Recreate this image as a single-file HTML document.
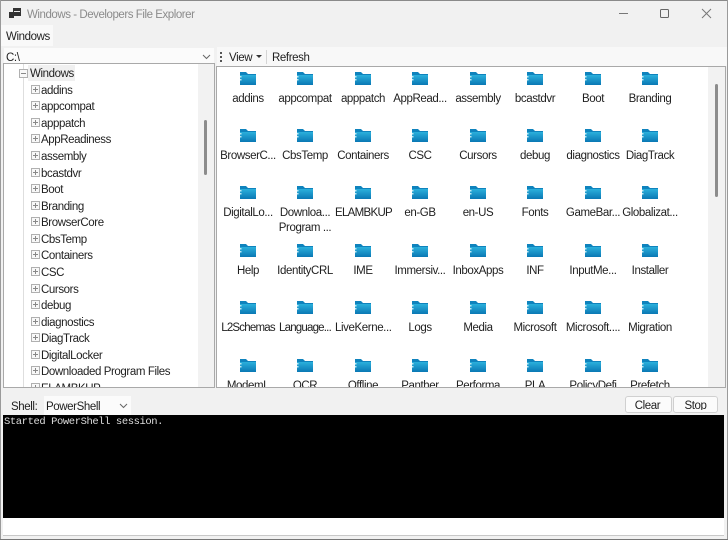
<!DOCTYPE html>
<html><head><meta charset="utf-8"><style>
html,body{margin:0;padding:0;background:#fff}
#w{position:relative;width:728px;height:540px;overflow:hidden;background:#f1f1f1;font-family:"Liberation Sans",sans-serif;font-size:11.500px;letter-spacing:-.4px;color:#1f1f1f}
#w div,#w svg{position:absolute}
.t{white-space:nowrap;line-height:16px;margin-top:1px}
.c{width:56px;text-align:center;white-space:nowrap;line-height:15px;overflow:visible;margin-top:1px}
.f{width:18px;height:15px}
.e{width:7px;height:7px;border:1px solid #b0b0b0;background:#f8f8f8}
.e:before{content:"";position:absolute;left:1px;top:3px;width:5px;height:1px;background:#888}
.p:after{content:"";position:absolute;left:3px;top:1px;width:1px;height:5px;background:#888}
</style></head><body><div id="w">
<svg width="0" height="0"><defs><linearGradient id="g" x1="0" y1="0" x2="0" y2="1"><stop offset="0" stop-color="#2bb0dc"/><stop offset="1" stop-color="#0a78b4"/></linearGradient>
<symbol id="fo" viewBox="0 0 18 15"><path d="M1 1h6l2 2h8v11H1z" fill="#0f83bd"/><path d="M1 4h16v10H1z" fill="url(#g)"/><path d="M1 5h1.500v1.500H1zM1 8h1.500v1.500H1z" fill="#bfeaf5"/></symbol></defs></svg>

<div style="left:0;top:0;width:728px;height:1px;background:#8a8a8a"></div>
<div style="left:0;top:0;width:1px;height:540px;background:#9a9a9a"></div>
<div style="left:727px;top:0;width:1px;height:540px;background:#9a9a9a"></div>
<div style="left:0;top:539px;width:728px;height:1px;background:#777"></div>

<svg style="left:9px;top:8px" width="13" height="12" viewBox="0 0 13 12"><path d="M4 0h8v8H4z" fill="#333"/><path d="M0 4h5v6H0z" fill="#333"/><path d="M5 3h6v1H5z" fill="#eee"/></svg>
<div class="t" style="left:27px;top:6px;color:#8b8b8b;letter-spacing:-.45px">Windows - Developers File Explorer</div>
<svg style="left:600px;top:0" width="128" height="28"><path d="M19 13.500h9" stroke="#777" fill="none"/><rect x="60.500" y="9.500" width="8" height="8" rx="1" stroke="#666" fill="none"/><path d="M102 9l9 9M111 9l-9 9" stroke="#777" fill="none"/></svg>

<div style="left:1px;top:25px;width:52px;height:21px;background:#f9f9f9"></div>
<div class="t" style="left:6px;top:28px">Windows</div>

<div style="left:4px;top:48px;width:210px;height:16px;background:#fbfbfb"></div>
<div class="t" style="left:6px;top:49px">C:\</div>
<svg style="left:202px;top:54px" width="9" height="6"><path d="M1 1l3.500 3.500L8 1" stroke="#666" fill="none"/></svg>
<div style="left:3px;top:63px;width:210px;height:323px;background:#fff;border:1px solid #a9a9a9;overflow:hidden">
<div style="left:194px;top:0;width:16px;height:323px;background:#f2f2f2"></div>
<div style="left:200px;top:56px;width:3px;height:55px;background:#8c8c8c;border-radius:2px"></div>
<div style="left:24px;top:1px;width:47px;height:16px;background:#f0f0f0"></div>
<div style="left:19px;top:0;width:1px;height:323px;background:#dedede"></div>
<div style="left:15px;top:5px" class="e"></div>
<div class="t" style="left:26px;top:1px">Windows</div>
<div class="e p" style="left:27px;top:21px"></div><div class="t" style="left:37px;top:18px">addins</div>
<div class="e p" style="left:27px;top:37px"></div><div class="t" style="left:37px;top:34px">appcompat</div>
<div class="e p" style="left:27px;top:54px"></div><div class="t" style="left:37px;top:51px">apppatch</div>
<div class="e p" style="left:27px;top:70px"></div><div class="t" style="left:37px;top:67px">AppReadiness</div>
<div class="e p" style="left:27px;top:87px"></div><div class="t" style="left:37px;top:84px">assembly</div>
<div class="e p" style="left:27px;top:104px"></div><div class="t" style="left:37px;top:101px">bcastdvr</div>
<div class="e p" style="left:27px;top:120px"></div><div class="t" style="left:37px;top:117px">Boot</div>
<div class="e p" style="left:27px;top:137px"></div><div class="t" style="left:37px;top:134px">Branding</div>
<div class="e p" style="left:27px;top:153px"></div><div class="t" style="left:37px;top:150px">BrowserCore</div>
<div class="e p" style="left:27px;top:170px"></div><div class="t" style="left:37px;top:167px">CbsTemp</div>
<div class="e p" style="left:27px;top:186px"></div><div class="t" style="left:37px;top:183px">Containers</div>
<div class="e p" style="left:27px;top:203px"></div><div class="t" style="left:37px;top:200px">CSC</div>
<div class="e p" style="left:27px;top:220px"></div><div class="t" style="left:37px;top:217px">Cursors</div>
<div class="e p" style="left:27px;top:236px"></div><div class="t" style="left:37px;top:233px">debug</div>
<div class="e p" style="left:27px;top:253px"></div><div class="t" style="left:37px;top:250px">diagnostics</div>
<div class="e p" style="left:27px;top:269px"></div><div class="t" style="left:37px;top:266px">DiagTrack</div>
<div class="e p" style="left:27px;top:286px"></div><div class="t" style="left:37px;top:283px">DigitalLocker</div>
<div class="e p" style="left:27px;top:302px"></div><div class="t" style="left:37px;top:299px">Downloaded Program Files</div>
<div class="e p" style="left:27px;top:319px"></div><div class="t" style="left:37px;top:316px">ELAMBKUP</div>
</div>

<div style="left:217px;top:47px;width:510px;height:19px;background:#f8f8f8"></div>
<div style="left:220px;top:52px;width:2px;height:10px;border-left:2px dotted #555"></div>
<div class="t" style="left:229px;top:49px">View</div>
<svg style="left:256px;top:55px" width="6" height="4"><path d="M0 0h6L3 3z" fill="#333"/></svg>
<div style="left:266px;top:50px;width:1px;height:14px;background:#d5d5d5"></div>
<div class="t" style="left:272px;top:49px">Refresh</div>

<div style="left:216px;top:66px;width:508px;height:320px;background:#fff;border:1px solid #a9a9a9;overflow:hidden">
<div style="left:491px;top:0;width:17px;height:320px;background:#f2f2f2"></div>
<div style="left:498px;top:17px;width:3px;height:113px;background:#8c8c8c;border-radius:2px"></div>
</div>

<svg class="f" style="left:239px;top:71px"><use href="#fo"/></svg><div class="c" style="left:220px;top:91px">addins</div>
<svg class="f" style="left:296px;top:71px"><use href="#fo"/></svg><div class="c" style="left:277px;top:91px">appcompat</div>
<svg class="f" style="left:354px;top:71px"><use href="#fo"/></svg><div class="c" style="left:335px;top:91px">apppatch</div>
<svg class="f" style="left:411px;top:71px"><use href="#fo"/></svg><div class="c" style="left:392px;top:91px">AppRead...</div>
<svg class="f" style="left:469px;top:71px"><use href="#fo"/></svg><div class="c" style="left:450px;top:91px">assembly</div>
<svg class="f" style="left:526px;top:71px"><use href="#fo"/></svg><div class="c" style="left:507px;top:91px">bcastdvr</div>
<svg class="f" style="left:584px;top:71px"><use href="#fo"/></svg><div class="c" style="left:565px;top:91px">Boot</div>
<svg class="f" style="left:641px;top:71px"><use href="#fo"/></svg><div class="c" style="left:622px;top:91px">Branding</div>

<svg class="f" style="left:239px;top:128px"><use href="#fo"/></svg><div class="c" style="left:220px;top:148px">BrowserC...</div>
<svg class="f" style="left:296px;top:128px"><use href="#fo"/></svg><div class="c" style="left:277px;top:148px">CbsTemp</div>
<svg class="f" style="left:354px;top:128px"><use href="#fo"/></svg><div class="c" style="left:335px;top:148px">Containers</div>
<svg class="f" style="left:411px;top:128px"><use href="#fo"/></svg><div class="c" style="left:392px;top:148px">CSC</div>
<svg class="f" style="left:469px;top:128px"><use href="#fo"/></svg><div class="c" style="left:450px;top:148px">Cursors</div>
<svg class="f" style="left:526px;top:128px"><use href="#fo"/></svg><div class="c" style="left:507px;top:148px">debug</div>
<svg class="f" style="left:584px;top:128px"><use href="#fo"/></svg><div class="c" style="left:565px;top:148px">diagnostics</div>
<svg class="f" style="left:641px;top:128px"><use href="#fo"/></svg><div class="c" style="left:622px;top:148px">DiagTrack</div>

<svg class="f" style="left:239px;top:185px"><use href="#fo"/></svg><div class="c" style="left:220px;top:205px">DigitalLo...</div>
<svg class="f" style="left:296px;top:185px"><use href="#fo"/></svg><div class="c" style="left:277px;top:205px">Downloa...<br>Program ...</div>
<svg class="f" style="left:354px;top:185px"><use href="#fo"/></svg><div class="c" style="left:335px;top:205px;letter-spacing:-.7px">ELAMBKUP</div>
<svg class="f" style="left:411px;top:185px"><use href="#fo"/></svg><div class="c" style="left:392px;top:205px">en-GB</div>
<svg class="f" style="left:469px;top:185px"><use href="#fo"/></svg><div class="c" style="left:450px;top:205px">en-US</div>
<svg class="f" style="left:526px;top:185px"><use href="#fo"/></svg><div class="c" style="left:507px;top:205px">Fonts</div>
<svg class="f" style="left:584px;top:185px"><use href="#fo"/></svg><div class="c" style="left:565px;top:205px">GameBar...</div>
<svg class="f" style="left:641px;top:185px"><use href="#fo"/></svg><div class="c" style="left:622px;top:205px">Globalizat...</div>

<svg class="f" style="left:239px;top:243px"><use href="#fo"/></svg><div class="c" style="left:220px;top:263px">Help</div>
<svg class="f" style="left:296px;top:243px"><use href="#fo"/></svg><div class="c" style="left:277px;top:263px">IdentityCRL</div>
<svg class="f" style="left:354px;top:243px"><use href="#fo"/></svg><div class="c" style="left:335px;top:263px">IME</div>
<svg class="f" style="left:411px;top:243px"><use href="#fo"/></svg><div class="c" style="left:392px;top:263px">Immersiv...</div>
<svg class="f" style="left:469px;top:243px"><use href="#fo"/></svg><div class="c" style="left:450px;top:263px">InboxApps</div>
<svg class="f" style="left:526px;top:243px"><use href="#fo"/></svg><div class="c" style="left:507px;top:263px">INF</div>
<svg class="f" style="left:584px;top:243px"><use href="#fo"/></svg><div class="c" style="left:565px;top:263px">InputMe...</div>
<svg class="f" style="left:641px;top:243px"><use href="#fo"/></svg><div class="c" style="left:622px;top:263px">Installer</div>

<svg class="f" style="left:239px;top:300px"><use href="#fo"/></svg><div class="c" style="left:220px;top:320px;letter-spacing:-.8px">L2Schemas</div>
<svg class="f" style="left:296px;top:300px"><use href="#fo"/></svg><div class="c" style="left:277px;top:320px;letter-spacing:-.8px">Language...</div>
<svg class="f" style="left:354px;top:300px"><use href="#fo"/></svg><div class="c" style="left:335px;top:320px">LiveKerne...</div>
<svg class="f" style="left:411px;top:300px"><use href="#fo"/></svg><div class="c" style="left:392px;top:320px">Logs</div>
<svg class="f" style="left:469px;top:300px"><use href="#fo"/></svg><div class="c" style="left:450px;top:320px">Media</div>
<svg class="f" style="left:526px;top:300px"><use href="#fo"/></svg><div class="c" style="left:507px;top:320px">Microsoft</div>
<svg class="f" style="left:584px;top:300px"><use href="#fo"/></svg><div class="c" style="left:565px;top:320px">Microsoft....</div>
<svg class="f" style="left:641px;top:300px"><use href="#fo"/></svg><div class="c" style="left:622px;top:320px">Migration</div>

<svg class="f" style="left:239px;top:358px"><use href="#fo"/></svg>
<svg class="f" style="left:296px;top:358px"><use href="#fo"/></svg>
<svg class="f" style="left:354px;top:358px"><use href="#fo"/></svg>
<svg class="f" style="left:411px;top:358px"><use href="#fo"/></svg>
<svg class="f" style="left:469px;top:358px"><use href="#fo"/></svg>
<svg class="f" style="left:526px;top:358px"><use href="#fo"/></svg>
<svg class="f" style="left:584px;top:358px"><use href="#fo"/></svg>
<svg class="f" style="left:641px;top:358px"><use href="#fo"/></svg>
<div style="left:217px;top:379px;width:490px;height:8px;overflow:hidden">
<div class="c" style="left:3px;top:-1px">ModemL</div><div class="c" style="left:60px;top:-1px">OCR</div><div class="c" style="left:118px;top:-1px">Offline</div><div class="c" style="left:175px;top:-1px">Panther</div><div class="c" style="left:233px;top:-1px">Performa</div><div class="c" style="left:290px;top:-1px">PLA</div><div class="c" style="left:348px;top:-1px">PolicyDefi</div><div class="c" style="left:405px;top:-1px">Prefetch</div>
</div>

<div class="t" style="left:11px;top:398px">Shell:</div>
<div style="left:44px;top:396px;width:87px;height:19px;background:#fbfbfb"></div>
<div class="t" style="left:46px;top:398px">PowerShell</div>
<svg style="left:119px;top:403px" width="9" height="6"><path d="M1 1l3.500 3.500L8 1" stroke="#666" fill="none"/></svg>
<div style="left:625px;top:396px;width:45px;height:15px;background:#fbfbfb;border:1px solid #d0d0d0;border-radius:3px"></div>
<div style="left:673px;top:396px;width:43px;height:15px;background:#fbfbfb;border:1px solid #d0d0d0;border-radius:3px"></div>
<div style="left:625px;top:397px;width:45px;height:13px;overflow:hidden;text-align:center;line-height:18px">Clear</div>
<div style="left:673px;top:397px;width:45px;height:13px;overflow:hidden;text-align:center;line-height:18px">Stop</div>

<div style="left:3px;top:415px;width:721px;height:103px;background:#000"></div>
<div class="t" style="left:4px;top:413px;font-family:'Liberation Mono',monospace;font-size:10.500px;letter-spacing:-.41px;color:#ddd">Started PowerShell session.</div>
<div style="left:3px;top:518px;width:721px;height:17px;background:#fff"></div>
<div style="left:3px;top:535px;width:721px;height:1px;background:#c8c8c8"></div>
</div></body></html>
